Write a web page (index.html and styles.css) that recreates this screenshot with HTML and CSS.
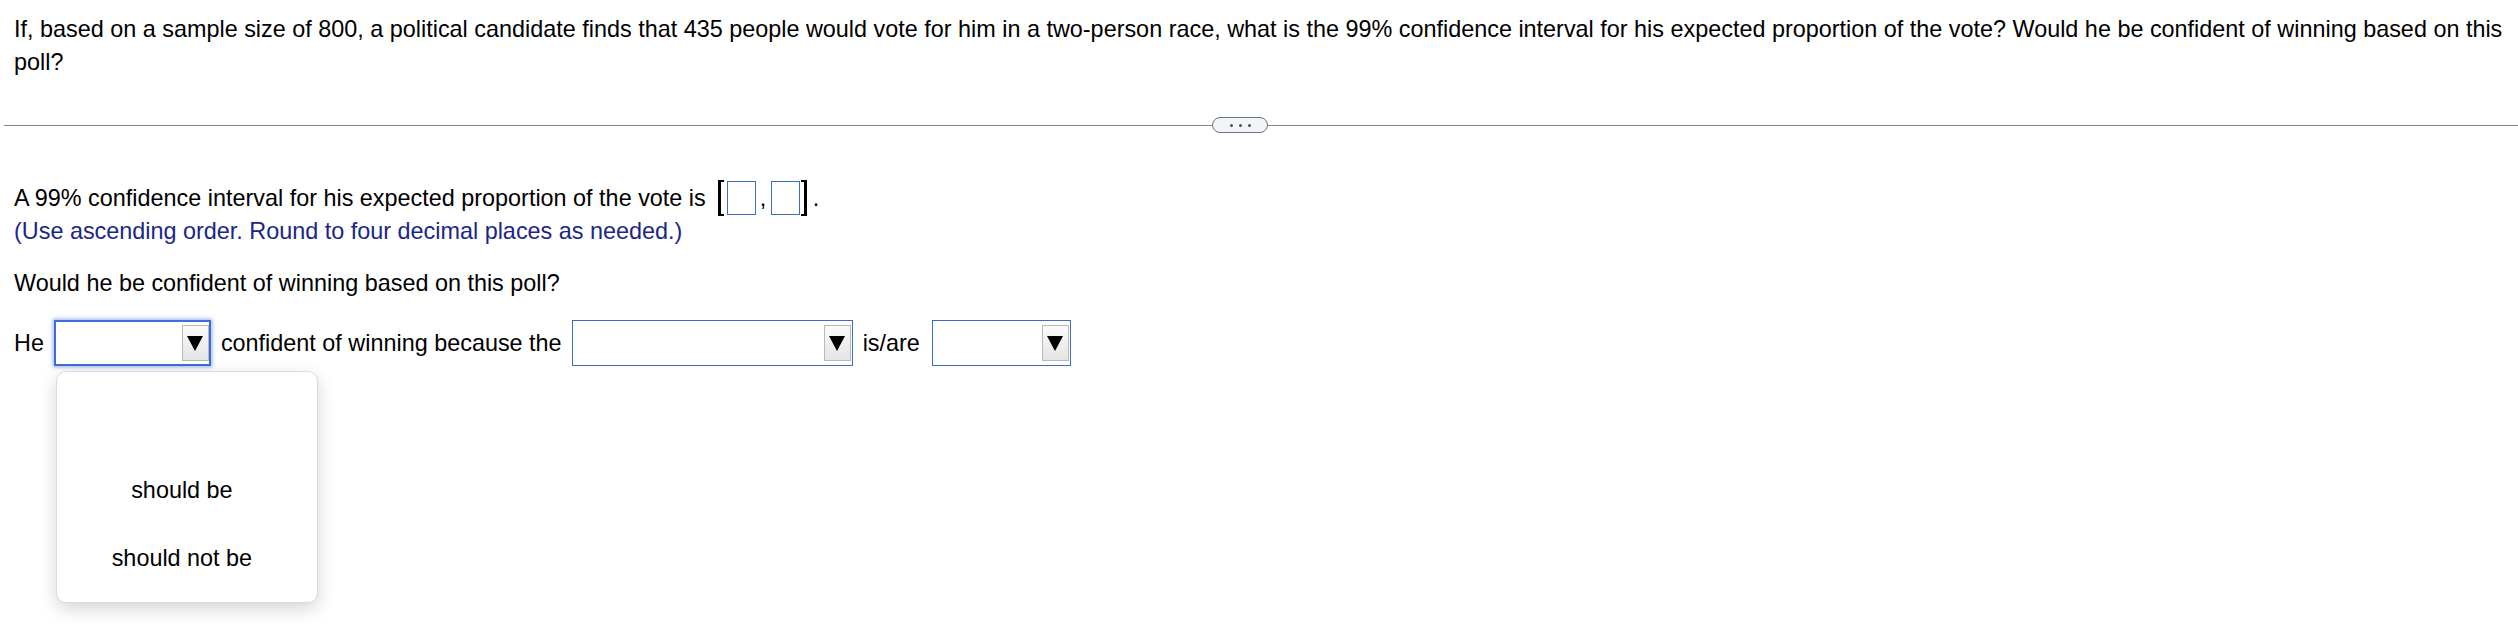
FILE: index.html
```html
<!DOCTYPE html>
<html lang="en">
<head>
<meta charset="utf-8">
<title>Confidence interval question</title>
<link rel="stylesheet" href="styles.css">
</head>
<body>
<div class="page">
  <p class="question">If, based on a sample size of 800, a political candidate finds that 435 people would vote for him in a two-person race, what is the 99% confidence interval for his expected proportion of the vote? Would he be confident of winning based on this poll?</p>

  <div class="divider">
    <div class="rule rule-left"></div>
    <div class="pill"><span class="dot"></span><span class="dot"></span><span class="dot"></span></div>
    <div class="rule rule-right"></div>
  </div>

  <div class="answer">
    <div class="interval">
      <span class="txt">A 99% confidence interval for his expected proportion of the vote is</span>
      <span class="bracket bracket-open"></span>
      <span class="box"></span>
      <span class="comma">,</span>
      <span class="box box-second"></span>
      <span class="bracket bracket-close"></span>
      <span class="period">.</span>
    </div>
    <p class="hint">(Use ascending order. Round to four decimal places as needed.)</p>

    <p class="subq">Would he be confident of winning based on this poll?</p>

    <div class="sentence">
      <span>He</span>
      <div class="select-wrap">
        <div class="select select-focused select-s">
          <span class="arrow"><svg width="16" height="15" viewBox="0 0 16 15"><polygon points="0,0 16,0 8,15" fill="#000"/></svg></span>
        </div>
        <div class="menu">
          <div class="opt"></div>
          <div class="opt">should be</div>
          <div class="opt">should not be</div>
        </div>
      </div>
      <span>confident of winning because the</span>
      <div class="select select-l">
        <span class="arrow"><svg width="16" height="15" viewBox="0 0 16 15"><polygon points="0,0 16,0 8,15" fill="#000"/></svg></span>
      </div>
      <span>is/are</span>
      <div class="select select-m">
        <span class="arrow"><svg width="16" height="15" viewBox="0 0 16 15"><polygon points="0,0 16,0 8,15" fill="#000"/></svg></span>
      </div>
    </div>
  </div>
</div>
</body>
</html>
```

FILE: styles.css
```css
html, body {
  margin: 0;
  padding: 0;
  background: #ffffff;
}

body {
  font-family: "Liberation Sans", Arial, Helvetica, sans-serif;
  font-size: 23.4px;
  line-height: 32.6px;
  color: #000000;
}

.page {
  width: 2518px;
  height: 630px;
  position: relative;
  overflow: hidden;
}

.question {
  margin: 13px 0 0 14px;
  width: 2500px;
}

.divider {
  display: flex;
  align-items: center;
  height: 16px;
  margin-top: 39px;
  padding-left: 4px;
}

.rule {
  height: 1px;
  background: #7c8494;
}

.rule-left {
  width: 1208px;
}

.rule-right {
  flex: 1;
}

.pill {
  box-sizing: border-box;
  width: 56px;
  height: 16px;
  border: 1px solid #6b7382;
  border-radius: 8px;
  background: #f2f4f7;
  display: flex;
  align-items: center;
  justify-content: center;
  gap: 6px;
}

.dot {
  width: 3px;
  height: 3px;
  border-radius: 50%;
  background: #4b5160;
}

.answer {
  padding-left: 14px;
  margin-top: 49px;
}

.interval {
  display: flex;
  align-items: flex-start;
  height: 32.6px;
}

.txt {
  margin-right: 12px;
}

.bracket {
  box-sizing: border-box;
  width: 6px;
  height: 36px;
  border-top: 2px solid #000;
  border-bottom: 2px solid #000;
  margin-top: -2.6px;
}

.bracket-open {
  border-left: 3px solid #000;
  margin-right: 3px;
}

.bracket-close {
  border-right: 3px solid #000;
  margin-left: 1px;
}

.box {
  box-sizing: border-box;
  width: 29px;
  height: 34px;
  border: 1px solid #3a6cc8;
  background: #fff;
  margin-top: -1.6px;
}

.comma {
  width: 15px;
  padding-left: 4px;
  box-sizing: border-box;
}

.period {
  margin-left: 6px;
}

.hint {
  margin: 0;
  color: #1b2687;
}

.subq {
  margin: 19.4px 0 0 0;
}

.sentence {
  display: flex;
  align-items: center;
  gap: 10px;
  margin-top: 20.8px;
  height: 46px;
}

.select-wrap {
  position: relative;
}

.select {
  box-sizing: border-box;
  height: 46px;
  border: 1px solid #3a6cc8;
  background: #fff;
  display: flex;
  justify-content: flex-end;
  align-items: center;
  padding-right: 1px;
}

.select-focused {
  border: 2px solid #3c6fd6;
  box-shadow: 0 0 4px 1px rgba(60, 111, 214, 0.55);
  padding-right: 0;
}

.select-s {
  width: 157px;
}

.select-l {
  width: 281px;
}

.select-m {
  width: 139px;
  margin-left: 2px;
}

.arrow {
  box-sizing: border-box;
  width: 27px;
  height: 36px;
  border: 1px solid #b9b9b9;
  background: linear-gradient(#fbfbfb, #e4e4e4);
  display: flex;
  align-items: center;
  justify-content: center;
}

.arrow svg {
  display: block;
}

.menu {
  position: absolute;
  left: 2px;
  top: 51px;
  box-sizing: border-box;
  width: 262px;
  height: 232px;
  padding: 16px 10px 12px 0;
  background: #fff;
  border: 1px solid #dcdcdc;
  border-radius: 10px;
  box-shadow: 0 6px 18px rgba(0, 0, 0, 0.17);
}

.opt {
  height: 68px;
  display: flex;
  align-items: center;
  justify-content: center;
  text-align: center;
}
```
